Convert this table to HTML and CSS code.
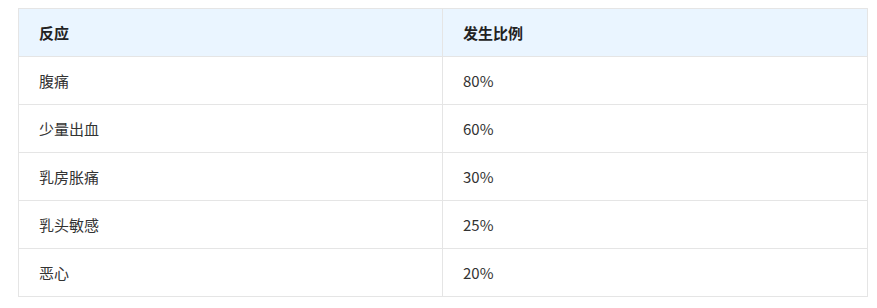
FILE: index.html
```html
<!DOCTYPE html>
<html lang="zh">
<head>
<meta charset="utf-8">
<link rel="stylesheet" href="styles.css">
</head>
<body>
<table class="data-table">
  <thead>
    <tr><th class="col-first">反应</th><th>发生比例</th></tr>
  </thead>
  <tbody>
    <tr><td>腹痛</td><td>80%</td></tr>
    <tr><td>少量出血</td><td>60%</td></tr>
    <tr><td>乳房胀痛</td><td>30%</td></tr>
    <tr><td>乳头敏感</td><td>25%</td></tr>
    <tr><td>恶心</td><td>20%</td></tr>
  </tbody>
</table>
</body>
</html>
```
FILE: styles.css
```css
html, body {
  margin: 0;
  padding: 0;
  background: #fff;
}
body {
  padding: 8px 9px 0 18px;
  font-family: "Noto Sans CJK SC", "Noto Sans", sans-serif;
  font-size: 15px;
  color: #333;
}
.data-table {
  width: 850px;
  border-collapse: collapse;
  table-layout: fixed;
}
.data-table th,
.data-table td {
  border: 1px solid #e5e5e5;
  height: 48px;
  padding: 0 20px;
  text-align: left;
  box-sizing: border-box;
}
.data-table .col-first {
  width: 424px;
}
.data-table th {
  background: #eaf5ff;
  font-weight: bold;
  color: #222;
}
```
